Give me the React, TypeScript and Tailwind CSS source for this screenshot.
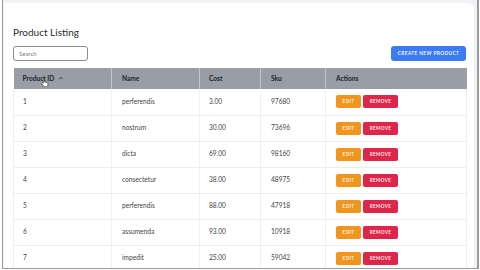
import { ChevronUp } from "lucide-react";

const rows = [
  { id: 1, name: "perferendis", cost: "3.00", sku: "97680" },
  { id: 2, name: "nostrum", cost: "30.00", sku: "73696" },
  { id: 3, name: "dicta", cost: "69.00", sku: "98160" },
  { id: 4, name: "consectetur", cost: "38.00", sku: "48975" },
  { id: 5, name: "perferendis", cost: "88.00", sku: "47918" },
  { id: 6, name: "assumenda", cost: "93.00", sku: "10918" },
  { id: 7, name: "impedit", cost: "25.00", sku: "59042" },
];

export default function App() {
  return (
    <div
      className="w-[480px] h-[270px] bg-white overflow-hidden"
      style={{ fontFamily: "Lato, 'Noto Sans', sans-serif" }}
    >
      <div className="ml-[2px] w-[477px] h-[269px] border-l border-r-2 border-b border-[#9b9b9b] bg-[#f1f2f5] pt-[3px] pr-[3px] pl-[1px] flex flex-col">
        <div className="flex-1 bg-white rounded-tr-md pl-[9px] pr-[8px] pt-[23px] overflow-hidden">
          <h1 className="text-[10px] leading-[13px] text-[#2a2a2a] font-normal">Product Listing</h1>

          <div className="mt-[7px] flex items-center justify-between">
            <input
              placeholder="Search"
              className="w-[75px] h-[15px] rounded-[3px] border border-[#8a8d93] px-[5px] text-[6px] text-[#555] placeholder:text-[#777] outline-none"
            />
            <button className="w-[75px] h-[15px] rounded-[3px] bg-[#3c7bf2] text-white text-[4.8px] font-semibold tracking-[0.4px]">
              CREATE NEW PRODUCT
            </button>
          </div>

          <div className="relative mt-[7px]">
            <table className="w-[453px] table-fixed border-collapse text-[6.6px] text-[#444] font-normal">
              <colgroup>
                <col className="w-[98px]" />
                <col className="w-[88px]" />
                <col className="w-[61px]" />
                <col className="w-[65px]" />
                <col className="w-[141px]" />
              </colgroup>
              <thead>
                <tr className="h-[21px] bg-[#989da6] text-[#1e2430] text-left">
                  <th className="pl-[9px] border-r border-[#c2c6cc] font-bold">
                    <span className="inline-flex items-center gap-[4px]">
                      Product ID
                      <ChevronUp className="w-[6px] h-[6px]" strokeWidth={3} />
                    </span>
                  </th>
                  <th className="pl-[10px] border-r border-[#c2c6cc] font-bold">Name</th>
                  <th className="pl-[9px] border-r border-[#c2c6cc] font-bold">Cost</th>
                  <th className="pl-[10px] border-r border-[#c2c6cc] font-bold">Sku</th>
                  <th className="pl-[10px] font-bold">Actions</th>
                </tr>
              </thead>
              <tbody>
                {rows.map((r) => (
                  <tr key={r.id} className="h-[26px] border-b border-[#ededed]">
                    <td className="pl-[9px] border-l border-r border-[#efefef] font-normal">{r.id}</td>
                    <td className="pl-[10px] border-r border-[#efefef] font-normal">{r.name}</td>
                    <td className="pl-[9px] border-r border-[#efefef] font-normal">{r.cost}</td>
                    <td className="pl-[10px] border-r border-[#efefef] font-normal">{r.sku}</td>
                    <td className="pl-[10px] border-r border-[#efefef]">
                      <div className="flex gap-[2px]">
                        <button className="w-[25px] h-[13px] rounded-[2px] bg-[#f0951d] text-white text-[4.6px] font-semibold tracking-[0.4px]">
                          EDIT
                        </button>
                        <button className="w-[35px] h-[13px] rounded-[2px] bg-[#df2549] text-white text-[4.6px] font-semibold tracking-[0.4px]">
                          REMOVE
                        </button>
                      </div>
                    </td>
                  </tr>
                ))}
              </tbody>
            </table>
            <svg
              className="absolute left-[28px] top-[10px]"
              width="8"
              height="9"
              viewBox="0 0 16 18"
            >
              <path
                d="M5 1.5c.8 0 1.5.7 1.5 1.5v5l1-.2c.8 0 1.3.4 1.5 1 .3-.4.8-.6 1.3-.5.6.1 1 .5 1.2 1 .3-.2.7-.3 1.1-.2.8.2 1.2.9 1.2 1.7V14c0 2-1.5 3.5-3.5 3.5H8c-1.2 0-2.2-.6-2.9-1.5L1.8 11.5c-.5-.7-.3-1.6.4-2 .6-.4 1.4-.3 1.8.3l.5.7V3c0-.8.7-1.5 1.5-1.5z"
                fill="white"
                stroke="#333"
                strokeWidth="1.3"
              />
            </svg>
          </div>
        </div>
      </div>
    </div>
  );
}
